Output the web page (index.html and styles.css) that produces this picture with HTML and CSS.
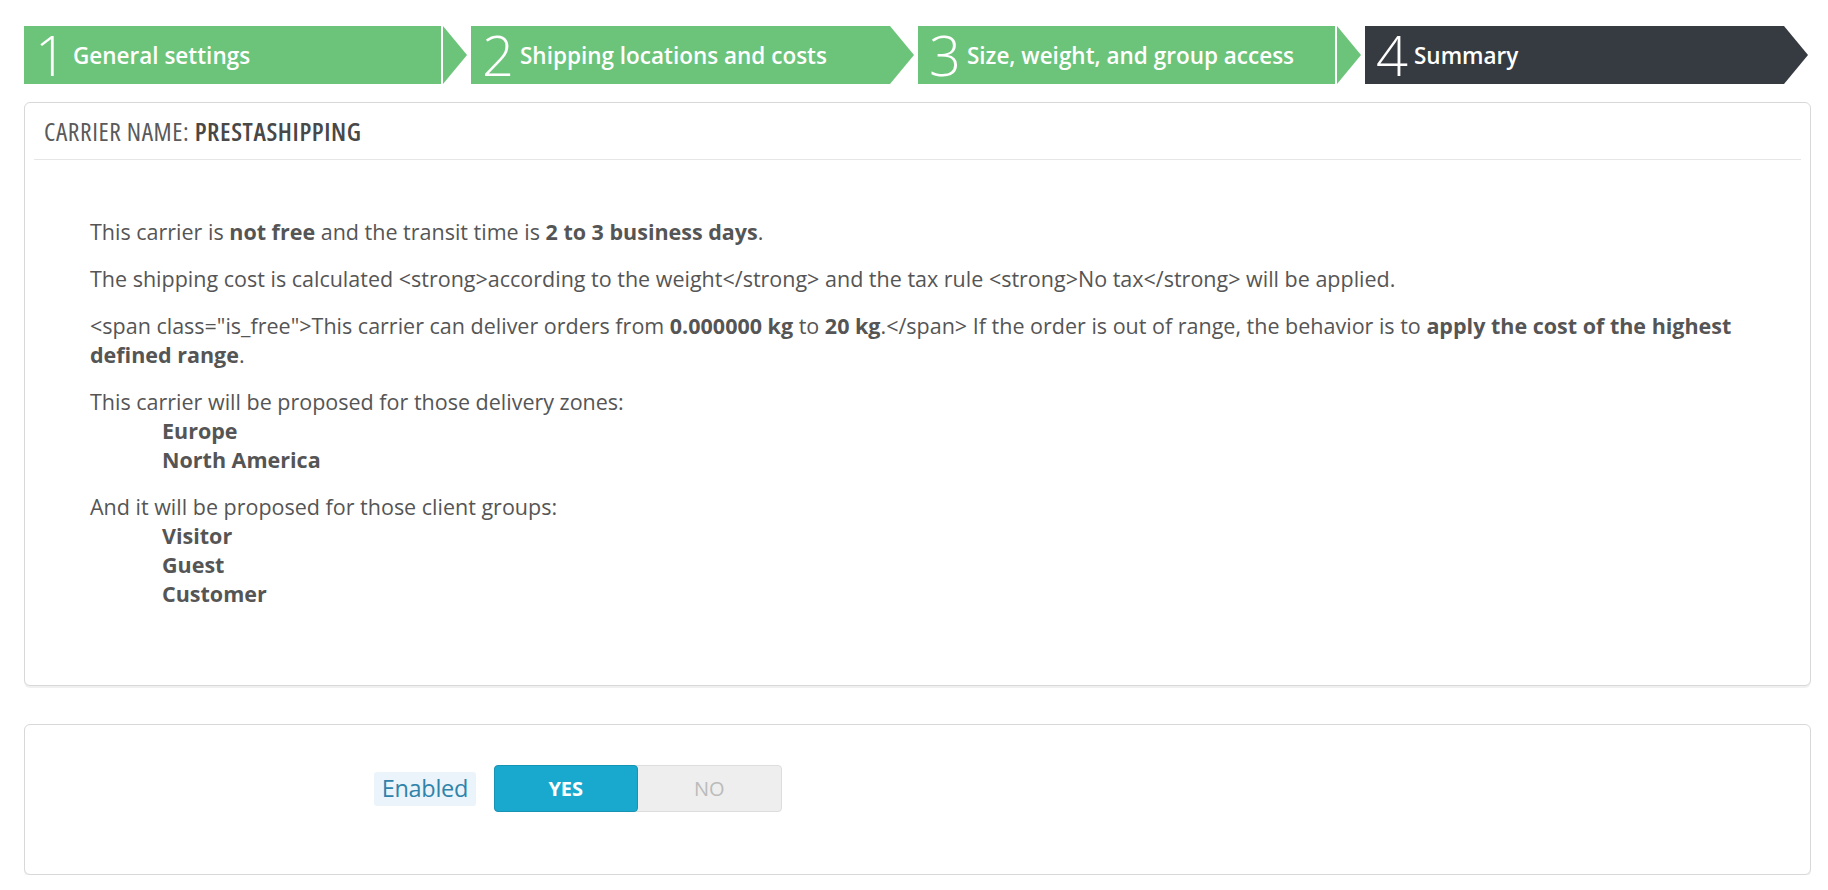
FILE: index.html
```html
<!DOCTYPE html>
<html lang="en">
<head>
<meta charset="utf-8">
<title>Carrier wizard - Summary</title>
<link rel="stylesheet" href="styles.css">
</head>
<body>
<div class="page">
  <ol class="steps">
    <li class="step done split"><span class="num">1</span><span class="title">General settings</span></li>
    <li class="step done"><span class="num">2</span><span class="title">Shipping locations and costs</span></li>
    <li class="step done split"><span class="num">3</span><span class="title">Size, weight, and group access</span></li>
    <li class="step current"><span class="num">4</span><span class="title">Summary</span></li>
  </ol>

  <section class="panel">
    <h3 class="panel-heading">Carrier name:&nbsp;<span class="carrier">Prestashipping</span></h3>
    <div class="summary">
      <p>This carrier is <strong>not free</strong> and the transit time is <strong>2 to 3 business days</strong>.</p>
      <p>The shipping cost is calculated &lt;strong&gt;according to the weight&lt;/strong&gt; and the tax rule &lt;strong&gt;No tax&lt;/strong&gt; will be applied.</p>
      <p>&lt;span class="is_free"&gt;This carrier can deliver orders from <strong>0.000000 kg</strong> to <strong>20 kg</strong>.&lt;/span&gt; If the order is out of range, the behavior is to <strong>apply the cost of the highest defined range</strong>.</p>
      <div class="group">
        This carrier will be proposed for those delivery zones:
        <ul class="items">
          <li>Europe</li>
          <li>North America</li>
        </ul>
      </div>
      <div class="group">
        And it will be proposed for those client groups:
        <ul class="items">
          <li>Visitor</li>
          <li>Guest</li>
          <li>Customer</li>
        </ul>
      </div>
    </div>
  </section>

  <section class="panel panel-form">
    <div class="form-row">
      <span class="control-label">Enabled</span>
      <div class="switch">
        <span class="opt on">YES</span>
        <span class="opt off">NO</span>
      </div>
    </div>
  </section>
</div>
</body>
</html>
```

FILE: styles.css
```css
* { box-sizing: border-box; }

html, body {
  margin: 0;
  padding: 0;
  background: #ffffff;
}

body {
  font-family: "Open Sans", "Liberation Sans", sans-serif;
  color: #555555;
}

.page {
  padding: 26px 17px 0 24px;
}

/* ---------- wizard steps ---------- */
.steps {
  list-style: none;
  margin: 0;
  padding: 0;
  display: flex;
  gap: 4px;
}

.step {
  position: relative;
  flex: 0 0 443px;
  height: 58px;
  display: flex;
  align-items: center;
  padding-left: 11px;
  color: #ffffff;
  clip-path: polygon(0 0, calc(100% - 24px) 0, 100% 50%, calc(100% - 24px) 100%, 0 100%);
}

.step.done { background: #6cc47a; }
.step.current { background: #363a41; }

.step.split::after {
  content: "";
  position: absolute;
  top: 0;
  bottom: 0;
  right: 24px;
  width: 2px;
  background: #ffffff;
}

.num {
  font-size: 56px;
  font-weight: 300;
  line-height: 1;
  margin-right: 6px;
  margin-top: -2px;
}

.title {
  font-size: 22.5px;
  font-weight: 600;
}

/* ---------- panels ---------- */
.panel {
  border: 1px solid #d8d8d8;
  border-radius: 6px;
  box-shadow: 0 2px 0 rgba(0, 0, 0, 0.06);
  background: #ffffff;
  margin-top: 18px;
}

.panel-heading {
  margin: 0 9px;
  height: 57px;
  display: flex;
  align-items: center;
  padding-left: 10px;
  border-bottom: 1px solid #e6e6e6;
  font-family: "Open Sans", sans-serif;
  font-stretch: 75%;
  font-size: 25.5px;
  letter-spacing: 0.6px;
  font-weight: 400;
  text-transform: uppercase;
  color: #5a5a5a;
}

.carrier {
  color: #484848;
  font-weight: 600;
}

.summary {
  padding: 57px 65px 77px 65px;
  font-size: 21.5px;
  line-height: 29px;
}

.summary p,
.summary .group {
  margin: 0 0 18px;
}

.summary .group:last-child {
  margin-bottom: 0;
}

.summary strong,
.items {
  font-weight: 700;
}

.items {
  list-style: none;
  margin: 0;
  padding: 0 0 0 72px;
}

/* ---------- form panel ---------- */
.panel-form {
  margin-top: 38px;
  padding: 40px 0 62px;
}

.form-row {
  display: grid;
  grid-template-columns: 451px 288px;
  column-gap: 18px;
  align-items: center;
}

.control-label {
  justify-self: end;
  background: #eaf4fa;
  color: #2f83ab;
  border-radius: 3px;
  padding: 2px 8px 3px;
  font-size: 23.5px;
  line-height: 29px;
  letter-spacing: -0.3px;
}

.switch {
  display: flex;
  height: 47px;
  border-radius: 4px;
  background: #eeeeee;
  border: 1px solid #dddddd;
}

.opt {
  flex: 1 1 50%;
  display: flex;
  align-items: center;
  justify-content: center;
  font-size: 20px;
  text-transform: uppercase;
}

.opt.on {
  background: #1aa9ce;
  color: #ffffff;
  font-weight: 700;
  border: 1px solid #1793b4;
  border-radius: 4px;
  margin: -1px 0 -1px -1px;
}

.opt.off {
  color: #bbbbbb;
}
```
